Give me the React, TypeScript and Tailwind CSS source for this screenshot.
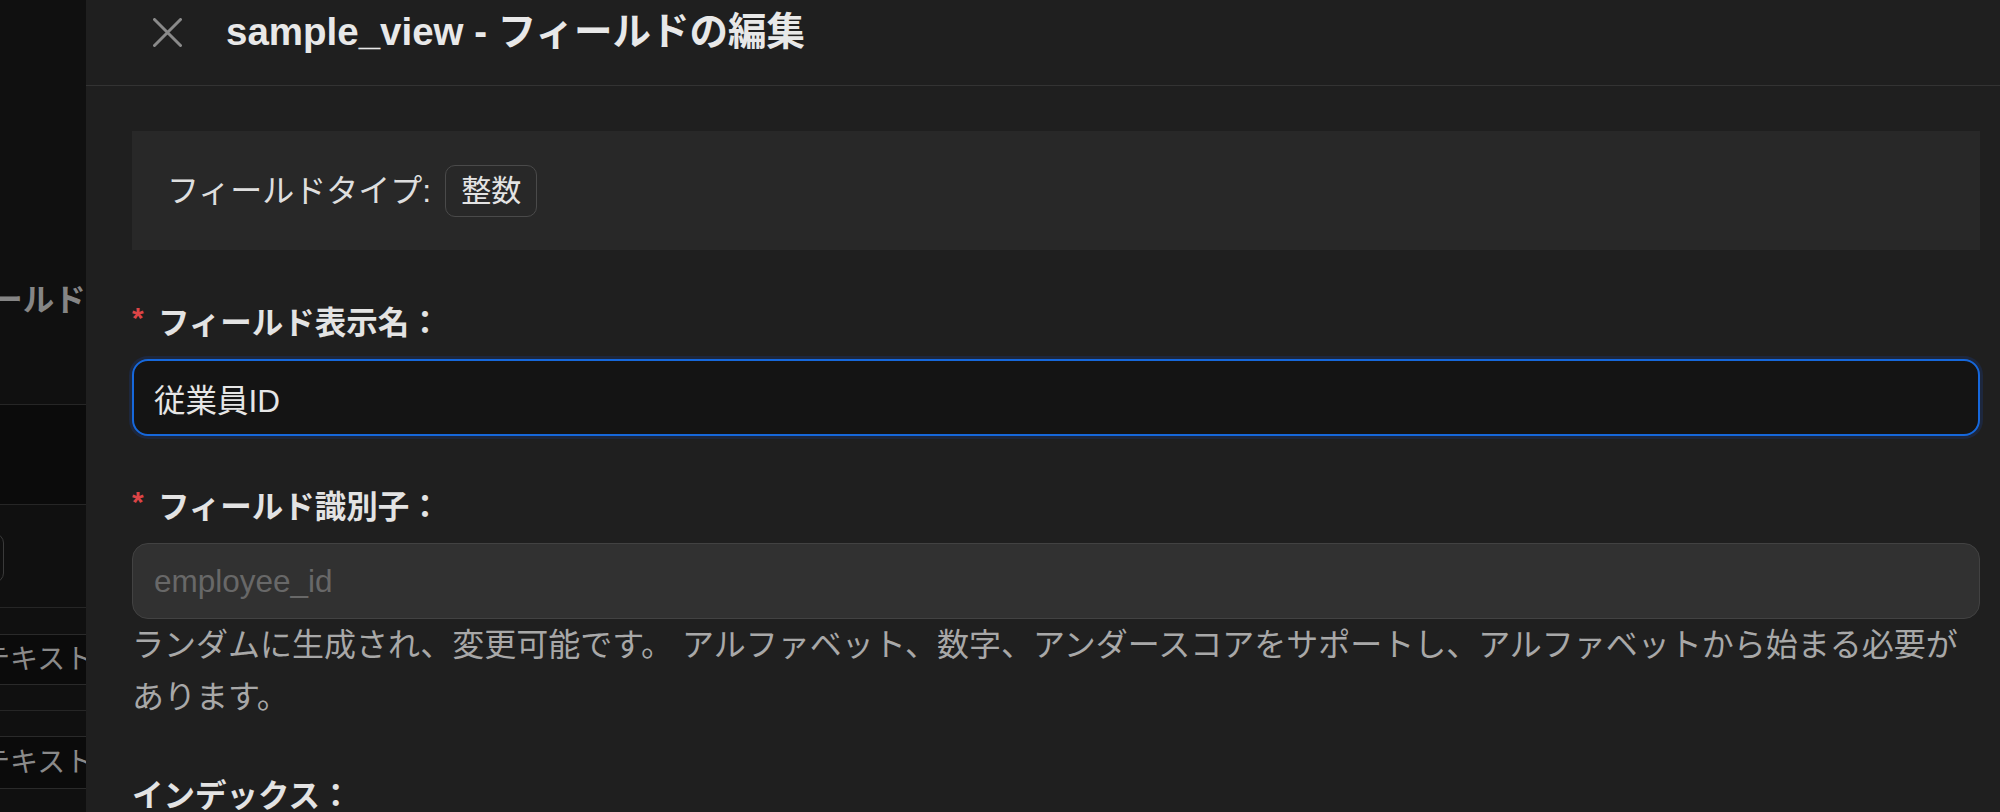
import React from "react"

const font = { fontFamily: '"Liberation Sans", "Noto Sans CJK JP", sans-serif' }

function CloseIcon() {
  return (
    <svg width="29" height="29" viewBox="0 0 29 29" className="shrink-0">
      <path d="M1.5 1.5 L27.5 27.5 M27.5 1.5 L1.5 27.5" stroke="#8a8a8a" strokeWidth="3" strokeLinecap="round" />
    </svg>
  )
}

function FieldLabel({ text, required }: { text: string; required?: boolean }) {
  return (
    <div className="flex h-[48px] items-center">
      {required && (
        <span className="w-[26px] shrink-0 -translate-y-[5px] text-[30px] font-bold leading-none text-[#dc4446]">*</span>
      )}
      <span className="text-[31.5px] font-semibold leading-[48px] text-[#e3e3e3]">{text}</span>
    </div>
  )
}

// Page behind the drawer (only a sliver is visible)
function BackgroundPage() {
  return (
    <div className="w-[86px] shrink-0 overflow-hidden bg-[#101010]">
      <div className="ml-[-71px] mt-[276px] h-[48px] whitespace-nowrap text-[31.5px] font-semibold leading-[48px] text-[#858585]">
        フィールド設定
      </div>
      <div className="mt-[80px] border-b border-[#262626]" />
      <div className="h-[99px] bg-[#0b0b0b]" />
      <div className="border-b border-[#262626]" />
      <div className="ml-[-56px] mt-[28px] h-[50px] w-[60px] rounded-[10px] border border-[#3a3a3a]" />
      <div className="mt-[24px] border-b border-[#262626]" />
      <div className="mt-[26px] flex h-[51px] items-center border-y border-[#2a2a2a] bg-[#0b0b0b]">
        <span className="ml-[-18px] whitespace-nowrap text-[28px] text-[#8a8a8a]">テキスト</span>
      </div>
      <div className="mt-[25px] border-b border-[#262626]" />
      <div className="mt-[25px] flex h-[53px] items-center border-y border-[#2a2a2a] bg-[#0b0b0b]">
        <span className="ml-[-18px] whitespace-nowrap text-[28px] text-[#8a8a8a]">テキスト</span>
      </div>
    </div>
  )
}

export default function App() {
  return (
    <div className="flex h-[812px] w-[2000px] overflow-hidden bg-[#101010]" style={font}>
      <BackgroundPage />

      <div className="flex min-w-0 flex-1 flex-col bg-[#1f1f1f]">
        {/* Header */}
        <div className="h-[86px] shrink-0 border-b border-[#333333]">
          <div className="flex h-[65px] items-center pl-[67px]">
            <CloseIcon />
            <h1 className="ml-[44px] whitespace-nowrap text-[38.5px] font-semibold leading-none text-[#e8e8e8]">
              sample_view - フィールドの編集
            </h1>
          </div>
        </div>

        {/* Body */}
        <div className="pl-[46px] pr-[20px] pt-[45px]">
          <div className="flex h-[119px] items-center bg-[#282828] pl-[35px]">
            <span className="text-[32px] text-[#dedede]">フィールドタイプ:</span>
            <span className="ml-[14px] flex h-[52px] items-center rounded-[10px] border border-[#4a4a4a] px-[15px] text-[30px] text-[#e3e3e3]">
              整数
            </span>
          </div>

          <div className="mt-[49px]">
            <FieldLabel text="フィールド表示名：" required />
            <input
              readOnly
              value="従業員ID"
              className="mt-[12px] block h-[77px] w-full rounded-[16px] border-2 border-[#1668dc] bg-[#141414] px-[20px] text-[31.5px] text-[#e6e6e6] shadow-[0_0_0_3px_rgba(22,80,200,0.18)] outline-none"
            />
          </div>

          <div className="mt-[47px]">
            <FieldLabel text="フィールド識別子：" required />
            <input
              readOnly
              disabled
              placeholder="employee_id"
              className="mt-[12px] block h-[76px] w-full rounded-[16px] border border-[#424242] bg-[#313131] px-[21px] text-[31.5px] text-[#686868] outline-none placeholder:text-[#686868]"
            />
            <p className="text-[32px] leading-[52px] text-[#a8a8a8]">
              ランダムに生成され、変更可能です。 アルファベット、数字、アンダースコアをサポートし、アルファベットから始まる必要があります。
            </p>
          </div>

          <div className="mt-[49px]">
            <FieldLabel text="インデックス：" />
          </div>
        </div>
      </div>
    </div>
  )
}
